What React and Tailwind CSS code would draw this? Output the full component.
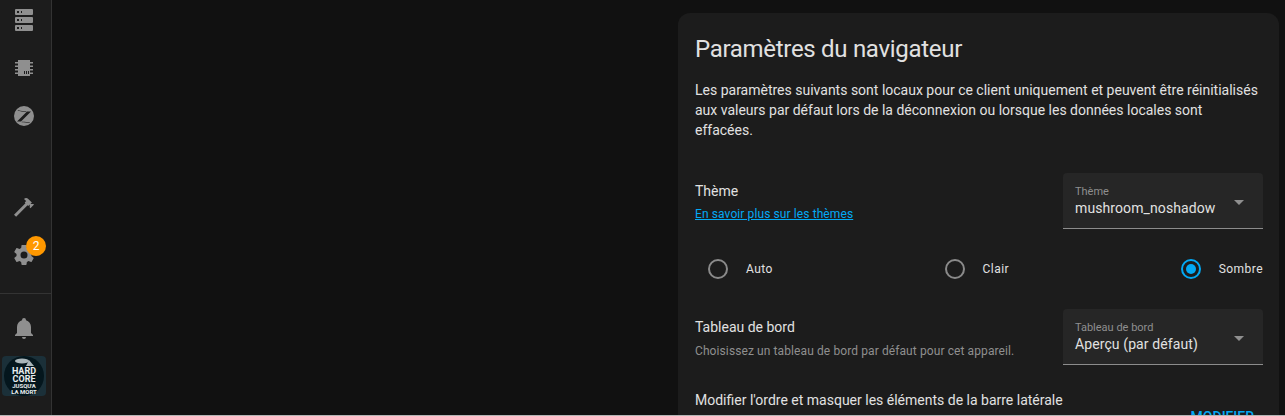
import React from 'react';

const mdi = {
    server: "M4,1H20A1,1 0 0,1 21,2V6A1,1 0 0,1 20,7H4A1,1 0 0,1 3,6V2A1,1 0 0,1 4,1M4,9H20A1,1 0 0,1 21,10V14A1,1 0 0,1 20,15H4A1,1 0 0,1 3,14V10A1,1 0 0,1 4,9M4,17H20A1,1 0 0,1 21,18V22A1,1 0 0,1 20,23H4A1,1 0 0,1 3,22V18A1,1 0 0,1 4,17M9,5H10V3H9V5M9,13H10V11H9V13M9,21H10V19H9V21M5,3V5H7V3H5M5,11V13H7V11H5M5,19V21H7V19H5Z",
    chip: "M6,4H18V20H6V4M3,6H6V7.5H3V6M3,9.5H6V11H3V9.5M3,13H6V14.5H3V13M3,16.5H6V18H3V16.5M18,6H21V7.5H18V6M18,9.5H21V11H18V9.5M18,13H21V14.5H18V13M18,16.5H21V18H18V16.5M12,15V18H13V15H12M14,15V18H15V15H14M16,15V18H17V15H16Z",
    zigbee: "M12,2A10,10 0 1,0 12,22A10,10 0 1,0 12,2ZM5,17.5L15,7.5H19L9,17.5ZM6,6C9,7 12,7.4 14.5,7.4L14,7.9C11,7.9 8,7.4 5.6,6.5ZM10,17.7C13,17.7 16,18 18,18.6L17.6,19C15,18.4 12,18.2 9.5,18.2Z",
    hammer: "M2 19.63L13.43 8.2L12.72 7.5L14.14 6.07L12 3.89C13.2 2.7 15.09 2.7 16.27 3.89L19.87 7.5L18.45 8.91H21.29L22 9.62L18.45 13.21L17.74 12.5V9.62L16.27 11.04L15.56 10.33L4.13 21.76L2 19.63Z",
    cog: "M12,15.5A3.5,3.5 0 0,1 8.5,12A3.5,3.5 0 0,1 12,8.5A3.5,3.5 0 0,1 15.5,12A3.5,3.5 0 0,1 12,15.5M19.43,12.97C19.47,12.65 19.5,12.33 19.5,12C19.5,11.67 19.47,11.34 19.43,11L21.54,9.37C21.73,9.22 21.78,8.95 21.66,8.73L19.66,5.27C19.54,5.05 19.27,4.96 19.05,5.05L16.56,6.05C16.04,5.66 15.5,5.32 14.87,5.07L14.5,2.42C14.46,2.18 14.25,2 14,2H10C9.75,2 9.54,2.18 9.5,2.42L9.13,5.07C8.5,5.32 7.96,5.66 7.44,6.05L4.95,5.05C4.73,4.96 4.46,5.05 4.34,5.27L2.34,8.73C2.21,8.95 2.27,9.22 2.46,9.37L4.57,11C4.53,11.34 4.5,11.67 4.5,12C4.5,12.33 4.53,12.65 4.57,12.97L2.46,14.63C2.27,14.78 2.21,15.05 2.34,15.27L4.34,18.73C4.46,18.95 4.73,19.03 4.95,18.95L7.44,17.94C7.96,18.34 8.5,18.68 9.13,18.93L9.5,21.58C9.54,21.82 9.75,22 10,22H14C14.25,22 14.46,21.82 14.5,21.58L14.87,18.93C15.5,18.67 16.04,18.34 16.56,17.94L19.05,18.95C19.27,19.03 19.54,18.95 19.66,18.73L21.66,15.27C21.78,15.05 21.73,14.78 21.54,14.63L19.43,12.97Z",
    bell: "M21,19V20H3V19L5,17V11C5,7.9 7.03,5.17 10,4.29C10,4.19 10,4.1 10,4A2,2 0 0,1 12,2A2,2 0 0,1 14,4C14,4.1 14,4.19 14,4.29C16.97,5.17 19,7.9 19,11V17L21,19M14,21A2,2 0 0,1 12,23A2,2 0 0,1 10,21",
    menuDown: "M7,10L12,15L17,10H7Z",
};

const Icon = ({ d, className = "" }) => (
    <svg viewBox="0 0 24 24" fillRule="evenodd" className={`w-6 h-6 fill-current ${className}`}>
        <path d={d} />
    </svg>
);

const NavItem = ({ d, children }) => (
    <div className="relative h-12 flex items-center pl-3 text-[#8f8f8f]">
        <Icon d={d} />
        {children}
    </div>
);

const Select = ({ label, value }) => (
    <div className="relative w-[200px] h-14 bg-[#262626] rounded-t border-b border-[#8c8c8c] pl-3 pt-3 shrink-0">
        <div className="text-[11px] leading-[14px] text-[#8f8f8f]">{label}</div>
        <div className="text-sm leading-5 text-[#e1e1e1] -mt-[1px] tracking-[0.1px]">{value}</div>
        <Icon d={mdi.menuDown} className="absolute right-3 top-[17px] text-[#8f8f8f]" />
    </div>
);

const Radio = ({ label, checked }) => (
    <div className="flex items-center gap-[18px]">
        <div className={`w-5 h-5 rounded-full border-2 flex items-center justify-center ${checked ? "border-[#03a9f4]" : "border-[#8a8a8a]"}`}>
            {checked && <div className="w-[10px] h-[10px] rounded-full bg-[#03a9f4]" />}
        </div>
        <span className="text-xs font-normal tracking-[0.45px] text-[#e1e1e1]">{label}</span>
    </div>
);

const Avatar = () => (
    <div className="w-11 h-10 ml-[2px] rounded bg-[#1b3039] flex items-center justify-center overflow-hidden">
        <div className="w-10 h-10 rounded-full bg-[#04161d] flex flex-col items-center text-[#e8edef] font-bold leading-none pt-[2px]">
            <svg viewBox="0 0 24 8" className="w-6 h-2 fill-[#aab6ba]">
                <ellipse cx="10" cy="3" rx="7" ry="2.6" />
                <path d="M17,2L22,8H14Z" />
            </svg>
            <span className="text-[9px] leading-[8px] mt-[1px]">HARD</span>
            <span className="text-[9px] leading-[8px]">CORE</span>
            <span className="text-[6px] leading-[6px]">JUSQU'A</span>
            <span className="text-[6px] leading-[5px]">LA MORT</span>
        </div>
    </div>
);

const App = () => {
    return (
        <div className="h-[416px] w-[1285px] overflow-hidden flex bg-[#111111] font-['Roboto',sans-serif] border-b border-[#b5b5b5]">
            <aside className="w-[52px] shrink-0 bg-[#1c1c1c] border-r border-[#333333] flex flex-col">
                <div className="-mt-1">
                    <NavItem d={mdi.server} />
                </div>
                <NavItem d={mdi.chip} />
                <NavItem d={mdi.zigbee} />
                <div className="h-[43px]" />
                <NavItem d={mdi.hammer} />
                <NavItem d={mdi.cog}>
                    <span className="absolute left-[26px] top-[5px] w-5 h-5 rounded-full bg-[#ff9800] text-white text-xs flex items-center justify-center">2</span>
                </NavItem>
                <div className="mt-[14px] border-t border-[#333333]" />
                <div className="h-[10px]" />
                <NavItem d={mdi.bell} />
                <div className="mt-1">
                    <Avatar />
                </div>
            </aside>

            <main className="flex-1 pt-[13px] pl-[626px] pr-[6px]">
                <div className="bg-[#1c1c1c] rounded-xl h-[500px] pl-[17px] pr-4 pt-[18px]">
                    <h1 className="text-2xl font-normal leading-[36px] tracking-[-0.3px] text-[#e1e1e1]">Paramètres du navigateur</h1>
                    <p className="mt-[13px] pr-[3px] text-sm leading-5 text-[#e1e1e1]">
                        Les paramètres suivants sont locaux pour ce client uniquement et peuvent être réinitialisés aux valeurs par défaut lors de la déconnexion ou lorsque les données locales sont effacées.
                    </p>

                    <div className="mt-[33px] flex justify-between">
                        <div className="pt-2">
                            <div className="text-sm leading-5 text-[#e1e1e1]">Thème</div>
                            <a className="block mt-[5px] text-xs leading-[16px] tracking-[0.1px] text-[#03a9f4] underline">En savoir plus sur les thèmes</a>
                        </div>
                        <Select label="Thème" value="mushroom_noshadow" />
                    </div>

                    <div className="mt-[30px] h-5 flex justify-between pl-[13px]">
                        <Radio label="Auto" />
                        <Radio label="Clair" />
                        <Radio label="Sombre" checked />
                    </div>

                    <div className="mt-[30px] flex justify-between">
                        <div className="pt-2">
                            <div className="text-sm leading-5 text-[#e1e1e1]">Tableau de bord</div>
                            <div className="mt-[6px] text-xs leading-[16px] tracking-[0.1px] text-[#8f8f8f]">Choisissez un tableau de bord par défaut pour cet appareil.</div>
                        </div>
                        <Select label="Tableau de bord" value="Aperçu (par défaut)" />
                    </div>

                    <div className="mt-[25px] text-sm leading-5 text-[#e1e1e1]">Modifier l'ordre et masquer les éléments de la barre latérale</div>
                    <div className="-mt-[3px] pr-[9px] text-right text-sm font-medium text-[#03a9f4]">MODIFIER</div>
                </div>
            </main>
        </div>
    );
};

export default App;
